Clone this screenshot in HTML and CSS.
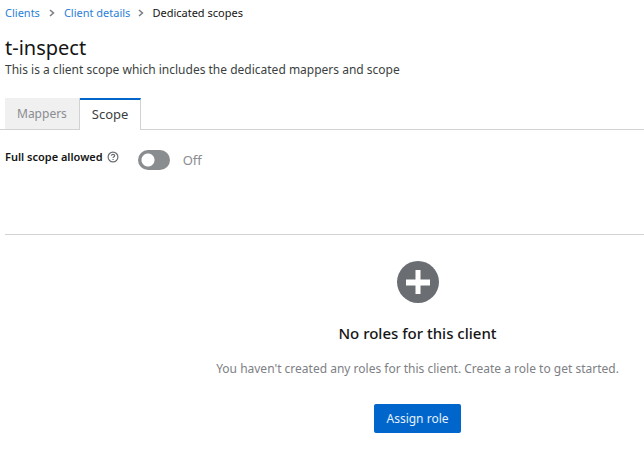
FILE: index.html
```html
<!DOCTYPE html>
<html lang="en">
<head>
<meta charset="utf-8">
<title>Dedicated scopes</title>
<link rel="stylesheet" href="styles.css">
</head>
<body>
<header class="header">
  <nav class="breadcrumb" aria-label="Breadcrumb">
    <a href="#">Clients</a>
    <svg class="chevron" viewBox="0 0 6 8" aria-hidden="true"><path d="M1 1 4.4 4 1 7"/></svg>
    <a href="#">Client details</a>
    <svg class="chevron" viewBox="0 0 6 8" aria-hidden="true"><path d="M1 1 4.4 4 1 7"/></svg>
    <span>Dedicated scopes</span>
  </nav>
  <h1>t-inspect</h1>
  <p class="description">This is a client scope which includes the dedicated mappers and scope</p>
</header>
<div class="tabs" role="tablist">
  <button class="tab" role="tab" aria-selected="false">Mappers</button>
  <button class="tab tab-current" role="tab" aria-selected="true">Scope</button>
</div>
<main>
  <div class="field">
    <label for="full-scope">Full scope allowed</label>
    <button class="help" aria-label="Help"><svg viewBox="0 0 12 12"><circle cx="6" cy="6" r="4.9"/><path d="M4.4 4.8C4.5 3.8 5.2 3.4 6 3.4c1 0 1.7.5 1.7 1.3 0 1.1-1.6 1-1.6 2.2M6.1 7.9v1.2"/></svg></button>
    <input class="switch" id="full-scope" type="checkbox" role="switch">
    <span class="state">Off</span>
  </div>
  <section class="empty">
    <svg class="plus" viewBox="0 0 42 42" aria-hidden="true"><circle cx="21" cy="21" r="21"/><path d="M18.5 9h5v9.500H33v6h-9.500V33h-5v-8.500H9v-6h9.500z"/></svg>
    <h2>No roles for this client</h2>
    <p>You haven't created any roles for this client. Create a role to get started.</p>
    <button class="primary">Assign role</button>
  </section>
</main>
</body>
</html>
```

FILE: styles.css
```css
* { box-sizing: border-box; }
body { margin: 0; background: #fff; color: #151515; font-family: "Noto Sans", sans-serif; font-size: 12px; }
h1, h2, p { margin: 0; font-weight: 400; }
button { font: inherit; border: 0; padding: 0; background: none; }
.header { padding: 4px 5px 0; }
.breadcrumb { display: flex; align-items: center; line-height: 18px; font-size: 11px; }
.breadcrumb a { color: #2b7fd6; text-decoration: none; }
.chevron { width: 6px; height: 8px; margin: 0 9px; fill: none; stroke: #7d8084; stroke-width: 1.6; }
.chevron:last-of-type { margin: 0 8px; }
h1 { margin-top: 14px; font-size: 20px; line-height: 24px; }
.description { margin-top: 1px; color: #3c3f42; line-height: 18px; }
.tabs { display: flex; margin-top: 19px; padding-left: 5px; height: 32px; border-bottom: 1px solid #d2d2d2; }
.tab { height: 31px; padding: 0 12px; background: #f0f0f0; color: #8a8d90; border-right: 1px solid #d2d2d2; }
.tab-current { height: 32px; padding: 0 12px 2px; background: #fff; color: #3c3f42; border-top: 2px solid #06c; font-size: 13px; }
.field { display: flex; height: 105px; margin-left: 5px; padding-top: 18px; border-bottom: 1px solid #d2d2d2; }
.field label { font-size: 11px; font-weight: 600; line-height: 18px; }
.help { width: 12px; height: 18px; margin-left: 4px; }
.help svg { display: block; width: 12px; height: 12px; fill: none; stroke: #6a6e73; stroke-width: 1.2; }
.switch { appearance: none; width: 32px; height: 20px; margin: 2px 13px 0 19px; border-radius: 10px; background: radial-gradient(circle at 10px 50%, #fff 6px, transparent 7px), #8a8d90; }
.state { margin-top: 2px; color: #8a8d90; font-size: 13px; line-height: 20px; }
.empty { display: flex; flex-direction: column; align-items: center; margin-left: 191px; padding-top: 26px; color: #7d8084; }
.plus { width: 42px; height: 42px; fill: #6a6e73; }
.plus path { fill: #fff; }
h2 { margin-top: 18px; color: #151515; font-size: 15px; font-weight: 500; line-height: 24px; }
.empty p { margin-top: 14px; line-height: 20px; }
.primary { margin-top: 25px; height: 29px; padding: 0 12px; border-radius: 2px; background: #06c; color: #e7f1fa; }
```
